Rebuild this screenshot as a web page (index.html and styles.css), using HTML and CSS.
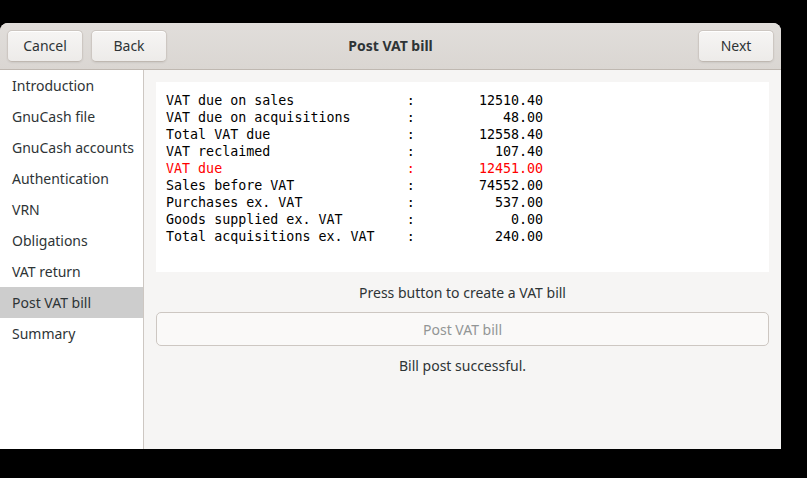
FILE: index.html
```html
<!DOCTYPE html>
<html>
<head>
<meta charset="utf-8">
<link rel="stylesheet" href="styles.css">
</head>
<body>
<div class="window">
  <header class="headerbar">
    <div class="hb-left">
      <button class="btn">Cancel</button>
      <button class="btn">Back</button>
    </div>
    <div class="title">Post VAT bill</div>
    <div class="hb-right">
      <button class="btn">Next</button>
    </div>
  </header>
  <div class="main">
    <nav class="sidebar">
      <div class="item">Introduction</div>
      <div class="item">GnuCash file</div>
      <div class="item">GnuCash accounts</div>
      <div class="item">Authentication</div>
      <div class="item">VRN</div>
      <div class="item">Obligations</div>
      <div class="item">VAT return</div>
      <div class="item selected">Post VAT bill</div>
      <div class="item">Summary</div>
    </nav>
    <section class="content">
      <pre class="textview">VAT due on sales              :        12510.40
VAT due on acquisitions       :           48.00
Total VAT due                 :        12558.40
VAT reclaimed                 :          107.40
<span class="due">VAT due                       :        12451.00</span>
Sales before VAT              :        74552.00
Purchases ex. VAT             :          537.00
Goods supplied ex. VAT        :            0.00
Total acquisitions ex. VAT    :          240.00</pre>
      <div class="label l1">Press button to create a VAT bill</div>
      <button class="btn wide" disabled>Post VAT bill</button>
      <div class="label l2">Bill post successful.</div>
    </section>
  </div>
</div>
</body>
</html>
```

FILE: styles.css
```css
html, body {
  margin: 0;
  padding: 0;
  background: #000;
}
body {
  width: 807px;
  height: 478px;
  overflow: hidden;
  font-family: "Noto Sans", "DejaVu Sans", sans-serif;
  font-size: 14px;
  color: #2e3436;
}
.window {
  margin-top: 23px;
  width: 781px;
  height: 426px;
  background: #f6f5f4;
  border-radius: 8px 8px 0 0;
  overflow: hidden;
  display: flex;
  flex-direction: column;
}
.headerbar {
  height: 47px;
  flex: none;
  box-sizing: border-box;
  border-bottom: 1px solid #bfb8b1;
  background: linear-gradient(#e1dedb, #dad6d2);
  display: flex;
  align-items: center;
  padding: 0 7px 1px;
  position: relative;
}
.hb-left {
  display: flex;
  gap: 8px;
}
.hb-right {
  margin-left: auto;
}
.title {
  position: absolute;
  left: 0;
  right: 0;
  text-align: center;
  font-weight: bold;
  pointer-events: none;
  color: #2e3436;
}
.btn {
  font-family: inherit;
  font-size: 14px;
  color: #2e3436;
  width: 76px;
  height: 32px;
  box-sizing: border-box;
  border: 1px solid #cdc7c2;
  border-bottom-color: #bfb8b1;
  border-radius: 5px;
  background: linear-gradient(#f6f5f4, #edebe9);
  box-shadow: inset 0 1px #fff, 0 1px 2px rgba(0,0,0,0.07);
  padding: 0;
}
.main {
  flex: 1;
  display: flex;
  min-height: 0;
}
.sidebar {
  width: 143px;
  flex: none;
  background: #fff;
  border-right: 1px solid #cdc7c2;
}
.item {
  height: 31px;
  line-height: 31px;
  padding-left: 12px;
  color: #2e3436;
}
.item.selected {
  background: #cdcdcd;
}
.content {
  flex: 1;
  padding: 12px;
  display: flex;
  flex-direction: column;
}
.textview {
  margin: 0;
  background: #fff;
  height: 190px;
  box-sizing: border-box;
  padding: 10px 10px;
  font-family: "DejaVu Sans Mono", monospace;
  font-size: 13.333px;
  line-height: 17px;
  color: #000;
}
.due {
  color: #ff0000;
}
.label {
  text-align: center;
  height: 20px;
  line-height: 20px;
}
.l1 {
  margin-top: 11px;
}
.btn.wide {
  width: 100%;
  height: 34px;
  margin-top: 9px;
  background: #faf9f8;
  border-color: #cdc7c2;
  box-shadow: none;
  color: #929595;
}
.l2 {
  margin-top: 10px;
}
```
